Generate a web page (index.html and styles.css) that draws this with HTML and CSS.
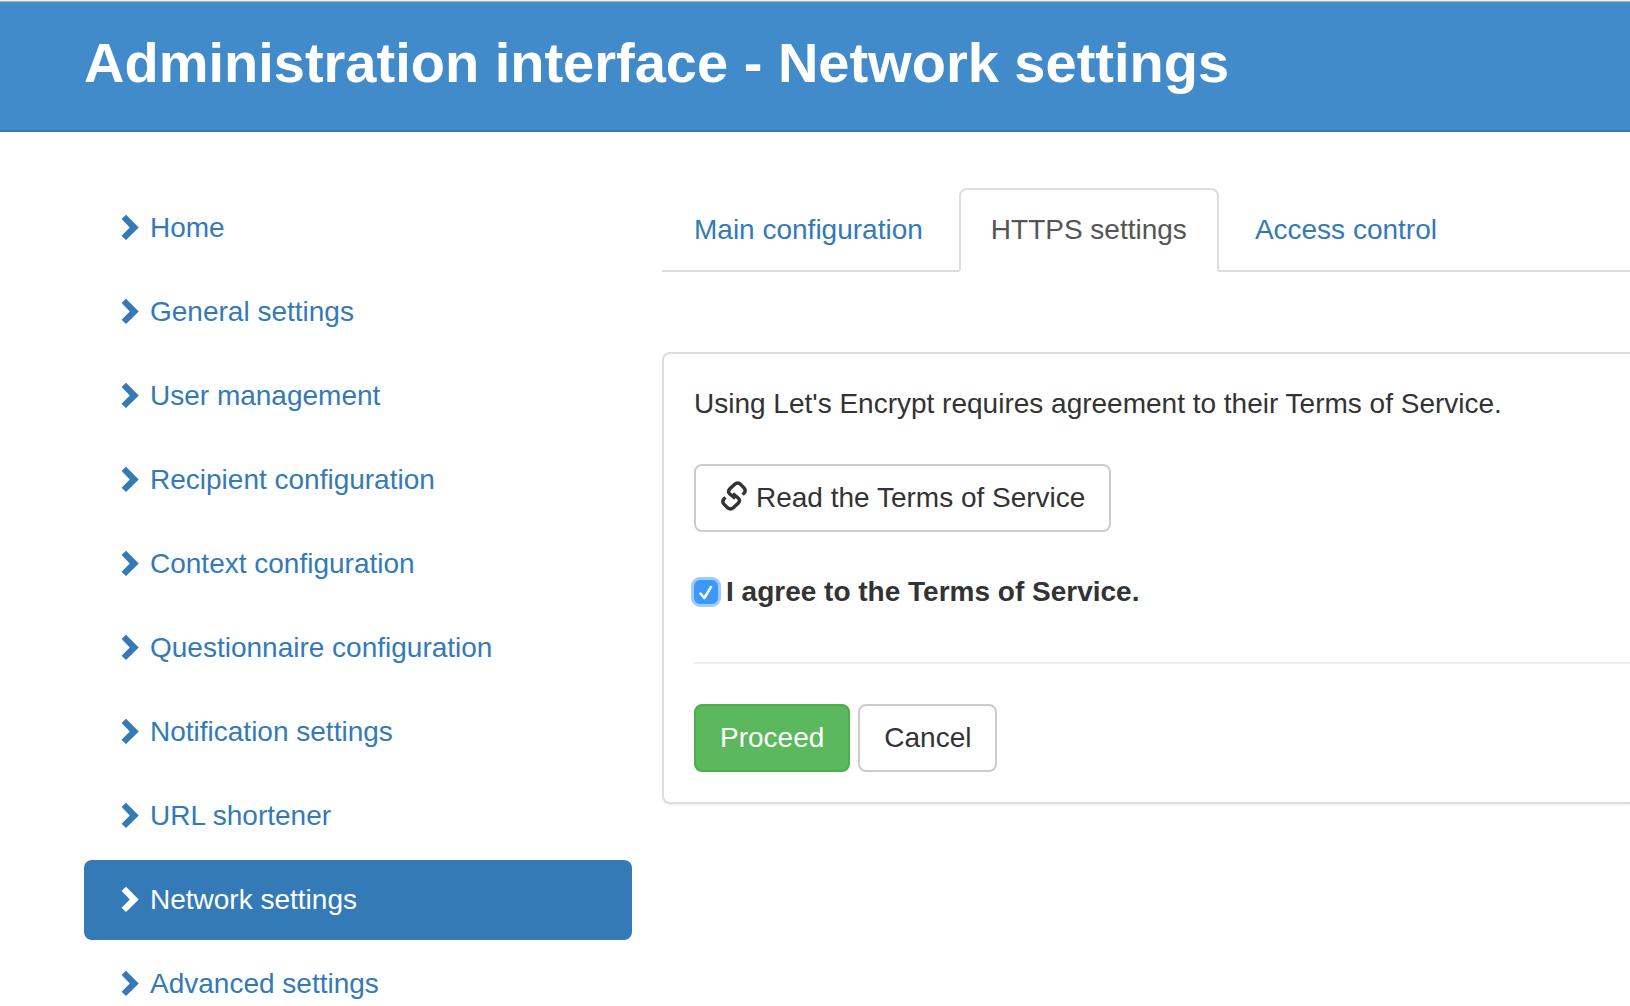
FILE: index.html
```html
<!DOCTYPE html>
<html lang="en">
<head>
<meta charset="utf-8">
<meta name="viewport" content="width=device-width, initial-scale=1">
<title>Administration interface - Network settings</title>
<link rel="stylesheet" href="styles.css">
</head>
<body>
<svg class="sprite" aria-hidden="true">
  <symbol id="chevron" viewBox="0 0 28 28"><path d="M12 0.700 24.700 13.400 12 26.100 7.600 21.700 15.800 13.400 7.600 5.100Z" fill="currentColor"/></symbol>
  <symbol id="link" viewBox="0 0 28 28"><g fill="none" stroke="currentColor" stroke-width="3.400"><path d="M15.200 14.500 9.600 9.700Q7.600 7.700 9.400 5.200L14.700 0.300Q17.300-2 20-0.200L24 3.800Q26.200 6.400 24.300 8.900L22.600 10.600"/><path d="M12.800 9.500 18.400 14.300Q20.400 16.300 18.600 18.800L13.300 23.700Q10.700 26 8 24.200L4 20.200Q1.800 17.600 3.700 15.100L5.400 13.400"/></g></symbol>
</svg>
<header class="header">
  <h1 class="header-title">Administration interface - Network settings</h1>
</header>
<div class="layout">
  <nav class="menu" aria-label="Administration">
    <a class="menu-item" href="#home"><svg class="icon"><use href="#chevron"/></svg>Home</a>
    <a class="menu-item" href="#general"><svg class="icon"><use href="#chevron"/></svg>General settings</a>
    <a class="menu-item" href="#users"><svg class="icon"><use href="#chevron"/></svg>User management</a>
    <a class="menu-item" href="#recipients"><svg class="icon"><use href="#chevron"/></svg>Recipient configuration</a>
    <a class="menu-item" href="#contexts"><svg class="icon"><use href="#chevron"/></svg>Context configuration</a>
    <a class="menu-item" href="#questionnaires"><svg class="icon"><use href="#chevron"/></svg>Questionnaire configuration</a>
    <a class="menu-item" href="#notifications"><svg class="icon"><use href="#chevron"/></svg>Notification settings</a>
    <a class="menu-item" href="#shortener"><svg class="icon"><use href="#chevron"/></svg>URL shortener</a>
    <a class="menu-item active" href="#network" aria-current="page"><svg class="icon"><use href="#chevron"/></svg>Network settings</a>
    <a class="menu-item" href="#advanced"><svg class="icon"><use href="#chevron"/></svg>Advanced settings</a>
  </nav>
  <main class="content">
    <nav class="tabs" aria-label="Network settings">
      <a class="tab" href="#main">Main configuration</a>
      <a class="tab active" href="#https" aria-current="page">HTTPS settings</a>
      <a class="tab" href="#access">Access control</a>
    </nav>
    <form class="panel">
      <p class="panel-text">Using Let's Encrypt requires agreement to their Terms of Service.</p>
      <button class="button" type="button"><svg class="icon"><use href="#link"/></svg>Read the Terms of Service</button>
      <div class="agree">
        <span class="check">
          <input class="check-input" type="checkbox" id="agree" checked>
          <svg class="check-mark" viewBox="0 0 24 24" aria-hidden="true"><path d="M6.500 13.500 10.300 18 17 7" fill="none" stroke="#fff" stroke-width="2.500" stroke-linecap="round" stroke-linejoin="round"/></svg>
        </span>
        <label class="agree-label" for="agree">I agree to the Terms of Service.</label>
      </div>
      <hr class="divider">
      <div class="actions">
        <button class="button primary" type="button">Proceed</button>
        <button class="button" type="button">Cancel</button>
      </div>
    </form>
  </main>
</div>
</body>
</html>
```
FILE: styles.css
```css
* { box-sizing: border-box; }

html { scrollbar-width: none; }

body {
  margin: 0;
  background: #fff;
  color: #333;
  font: 28px/40px "Helvetica Neue", Helvetica, "Liberation Sans", Arial, sans-serif;
}

a { color: #337ab7; text-decoration: none; }

.sprite { display: none; }

.icon { flex: none; width: 28px; height: 28px; overflow: visible; }

#chevron,
#link { overflow: visible; }

.header {
  padding: 31px 84px 36px;
  border-top: 1px solid #eee;
  border-bottom: 2px solid #337ab7;
  background: #428bca;
  box-shadow: inset 0 1px #b0b0b0;
  color: #fff;
}

.header-title { margin: 0; font-size: 56px; line-height: 62px; }

.layout {
  display: grid;
  grid-template-columns: 137fr 242fr;
  gap: 30px;
  align-items: start;
  padding: 56px 0 0 84px;
}

.menu { display: flex; flex-direction: column; gap: 4px; }

.menu-item {
  display: flex;
  align-items: center;
  gap: 8px;
  padding: 20px 30px;
  border-radius: 8px;
}

.menu-item.active { background: #337ab7; color: #fff; }

.tabs {
  display: flex;
  gap: 4px;
  margin-bottom: 80px;
  border-bottom: 2px solid #ddd;
}

.tab {
  margin-bottom: -2px;
  padding: 20px 30px;
  border: 2px solid transparent;
  border-radius: 8px 8px 0 0;
}

.tab.active { border-color: #ddd #ddd #fff; background: #fff; color: #555; }

.panel {
  display: flex;
  flex-direction: column;
  align-items: flex-start;
  gap: 40px;
  padding: 30px 0 30px 30px;
  border: 2px solid #ddd;
  border-right: 0;
  border-radius: 8px 0 0 8px;
  box-shadow: 0 2px 2px rgba(0, 0, 0, 0.05);
}

.panel-text { margin: 0; }

.button {
  display: flex;
  align-items: center;
  gap: 8px;
  padding: 12px 24px;
  border: 2px solid #ccc;
  border-radius: 8px;
  background: #fff;
  color: #333;
  font: inherit;
}

.button.primary { border-color: #4cae4c; background: #5cb85c; color: #fff; }

.agree { display: flex; align-items: center; gap: 8px; margin-bottom: 10px; }

.check { display: grid; }

.check-input,
.check-mark { grid-area: 1 / 1; width: 24px; height: 24px; margin: 0; }

.check-input {
  appearance: none;
  border-radius: 6px;
  background: #3b99fc;
  box-shadow: 0 0 0 3px #9dccfd;
}

.check-mark { visibility: hidden; pointer-events: none; }

.check-input:checked + .check-mark { visibility: visible; }

.agree-label { font-weight: bold; }

.divider {
  align-self: stretch;
  width: 100%;
  margin: 0;
  border: 0;
  border-top: 2px solid #eee;
}

.actions { display: flex; gap: 8px; }
```
